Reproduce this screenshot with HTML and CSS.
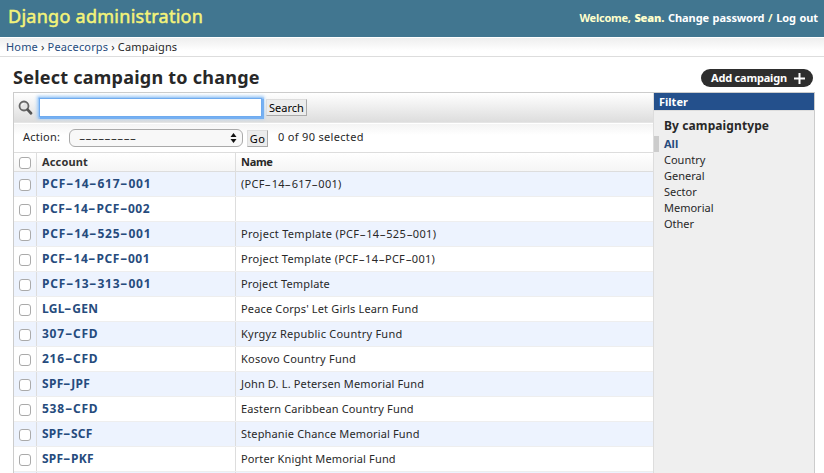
FILE: index.html
```html
<!DOCTYPE html>
<html lang="en">
<head>
<meta charset="utf-8">
<title>Select campaign to change</title>
<link rel="stylesheet" href="styles.css">
</head>
<body>
<header class="header">
  <div class="branding">Django administration</div>
  <div class="user-tools"><span class="welcome">Welcome,</span> <b class="user">Sean.</b> <a class="pw">Change password</a> / <a>Log out</a></div>
</header>
<nav class="breadcrumbs"><a>Home</a> › <a>Peacecorps</a> › Campaigns</nav>
<main class="content">
  <div class="title-row">
    <h1>Select campaign to change</h1>
    <a class="add"><span>Add campaign</span><svg width="11" height="11" viewBox="0 0 11 11"><path d="M5.5 0v11M0 5.5h11" stroke="#fff" stroke-width="2"/></svg></a>
  </div>
  <div class="changelist">
    <div class="results">
      <div class="toolbar">
        <svg class="glass" width="16" height="16" viewBox="0 0 16 16"><circle cx="6" cy="6" r="4.5" fill="#e4e4e4" stroke="#666" stroke-width="1.8"/><path d="M3.6 5.6a2.6 2.6 0 0 1 2.6-2.1" fill="none" stroke="#fff"/><path d="M9.6 9.6l3.4 3.6" stroke="#555" stroke-width="2.8" stroke-linecap="round"/></svg>
        <input class="query" type="text">
        <button class="btn search">Search</button>
      </div>
      <div class="actions">
        <span class="label">Action:</span>
        <div class="select"><span class="dashes">---------</span><svg width="7" height="10" viewBox="0 0 7 10"><path d="M3.5 0l3 4h-6zM3.5 10l3-4h-6z" fill="#111"/></svg></div>
        <button class="btn go">Go</button>
        <span class="count">0 of 90 selected</span>
      </div>
      <div class="row head"><div class="check"><i></i></div><div class="account">Account</div><div class="name">Name</div></div>
      <div class="row odd"><div class="check"><i></i></div><div class="account num">PCF<s>-</s>14<s>-</s>617<s>-</s>001</div><div class="name code">(PCF<s>-</s>14<s>-</s>617<s>-</s>001)</div></div>
      <div class="row"><div class="check"><i></i></div><div class="account mix">PCF<s>-</s>14<s>-</s>PCF<s>-</s>002</div><div class="name"></div></div>
      <div class="row odd"><div class="check"><i></i></div><div class="account num">PCF<s>-</s>14<s>-</s>525<s>-</s>001</div><div class="name code">Project Template (PCF<s>-</s>14<s>-</s>525<s>-</s>001)</div></div>
      <div class="row"><div class="check"><i></i></div><div class="account mix">PCF<s>-</s>14<s>-</s>PCF<s>-</s>001</div><div class="name code2">Project Template (PCF<s>-</s>14<s>-</s>PCF<s>-</s>001)</div></div>
      <div class="row odd"><div class="check"><i></i></div><div class="account num">PCF<s>-</s>13<s>-</s>313<s>-</s>001</div><div class="name">Project Template</div></div>
      <div class="row"><div class="check"><i></i></div><div class="account">LGL<s>-</s>GEN</div><div class="name">Peace Corps' Let Girls Learn Fund</div></div>
      <div class="row odd"><div class="check"><i></i></div><div class="account num">307<s>-</s>CFD</div><div class="name wide">Kyrgyz Republic Country Fund</div></div>
      <div class="row"><div class="check"><i></i></div><div class="account num">216<s>-</s>CFD</div><div class="name wide">Kosovo Country Fund</div></div>
      <div class="row odd"><div class="check"><i></i></div><div class="account tight">SPF<s>-</s>JPF</div><div class="name">John D. L. Petersen Memorial Fund</div></div>
      <div class="row"><div class="check"><i></i></div><div class="account num">538<s>-</s>CFD</div><div class="name">Eastern Caribbean Country Fund</div></div>
      <div class="row odd"><div class="check"><i></i></div><div class="account">SPF<s>-</s>SCF</div><div class="name">Stephanie Chance Memorial Fund</div></div>
      <div class="row"><div class="check"><i></i></div><div class="account">SPF<s>-</s>PKF</div><div class="name">Porter Knight Memorial Fund</div></div>
      <div class="row odd last"><div class="check"></div><div class="account"></div><div class="name"></div></div>
    </div>
    <aside class="filter">
      <h2>Filter</h2>
      <h3>By campaigntype</h3>
      <ul><li class="selected">All</li><li>Country</li><li>General</li><li>Sector</li><li>Memorial</li><li>Other</li></ul>
    </aside>
  </div>
</main>
</body>
</html>
```
FILE: styles.css
```css
* { box-sizing: border-box; }
body { margin: 0; background: #fff; color: #282828; font: 11px/16px "Noto Sans", "Lucida Grande", sans-serif; }
.header { height: 37px; padding: 0 6px 0 8px; display: flex; justify-content: space-between; background: #417690; color: #ffc; }
.branding { font-size: 18px; line-height: 33px; letter-spacing: .27px; color: #f4f379; -webkit-text-stroke: .5px #f4f379; }
.user-tools { font-weight: bold; line-height: 35px; letter-spacing: -.1px; word-spacing: .9px; white-space: pre; }
.welcome { letter-spacing: -.25px; }
.user-tools a { color: #fff; }
.breadcrumbs { height: 20px; padding: 0 6px; line-height: 18px; letter-spacing: .16px; border-top: 1px solid #fff; border-bottom: 1px solid #ddd; background: linear-gradient(#eee, #fff 70%); }
.breadcrumbs a { color: #264b7d; }
.content { padding: 0 9px 0 13px; }
.title-row { height: 35px; display: flex; justify-content: space-between; }
h1 { margin: 0; padding-top: 8px; font-size: 18px; line-height: 24px; letter-spacing: .24px; }
.add { width: 112px; height: 18px; margin: 12px 2px 0 0; padding: 0 8px 0 10px; display: flex; align-items: center; justify-content: space-between; border-radius: 9px; background: #2e2e2e; color: #fff; font-weight: bold; letter-spacing: -.2px; }
.changelist { height: 381px; display: flex; border: 1px solid #ccc; border-bottom: 0; }
.results { width: 639px; flex: none; }
.toolbar { height: 30px; padding-left: 4px; display: flex; align-items: center; background: linear-gradient(#fff, #ddd); border-bottom: 1px solid #e5e5e5; }
.glass { margin-right: 5px; }
.query { width: 223px; height: 19px; padding: 0; border: 1px solid #6fabef; outline: none; box-shadow: 0 0 1px 1.5px #76b0f2, 0 0 3px 2px #a3ccf8; }
.btn { padding: 0; border: 1px solid; border-color: #ddd #aaa #aaa #ddd; background: #ececec; color: #000; font: 11px/15px "Noto Sans", sans-serif; height: 17px; }
.search { width: 41px; margin-left: 4px; }
.go { width: 21px; margin-left: 4px; line-height: 13px; letter-spacing: .5px; }
.actions { height: 30px; padding-left: 9px; display: flex; align-items: center; background: linear-gradient(#f4f4f4, #fff 40%); border-bottom: 1px solid #ddd; border-top: 1px solid #fff; }
.label { width: 46px; padding-bottom: 2px; letter-spacing: .25px; }
.select { width: 174px; height: 18px; padding: 0 5px 0 9px; display: flex; align-items: center; justify-content: space-between; border: 1px solid #aaa; border-radius: 6px; background: #f8f8f8; }
.dashes { transform: scaleX(1.79); transform-origin: left; }
.count { margin-left: 10px; padding-bottom: 2px; letter-spacing: .32px; }
.row { height: 25px; display: flex; border-bottom: 1px solid #eee; background: #fff; }
.odd { background: #edf3fe; }
.check { width: 23px; padding: 7px 0 0 5px; border-right: 1px solid #ddd; }
.check i { display: block; width: 12px; height: 12px; border: 1px solid #aaa; border-radius: 3px; background: #fff; }
.account { width: 199px; padding-left: 5px; border-right: 1px solid #ddd; color: #264b7d; font-size: 12px; line-height: 24px; font-weight: bold; letter-spacing: .25px; }
.account.num { letter-spacing: .76px; }
.account.mix { letter-spacing: .6px; }
.account.tight { letter-spacing: .3px; }
.name { flex: 1; padding-left: 5px; line-height: 23px; letter-spacing: .15px; }
.name.wide { letter-spacing: .24px; }
.name.code { letter-spacing: .3px; }
.name.code2 { letter-spacing: .25px; }
s { display: inline-block; text-decoration: none; transform: scaleX(1.8); margin: 0 1.5px; }
.account s { margin: 0 1.75px; }
.head { height: 19px; border-color: #ddd; background: linear-gradient(#fff, #f5f5f5); font-weight: bold; }
.head .check { padding-top: 4px; }
.head .account { color: #333; font-size: 11px; line-height: 17px; letter-spacing: .15px; }
.head .name { line-height: 17px; letter-spacing: -.3px; }
.last { height: 2px; border-bottom: 0; }
.last .check { padding: 0; }
.filter { flex: 1; border-left: 1px solid #ddd; background: #efefef; }
h2 { margin: 0; height: 18px; padding-left: 5px; border-bottom: 1px solid #ddd; background: #24508c; color: #fff; font-size: 11px; line-height: 18px; }
h3 { margin: 7px 0 2px; padding-left: 10px; font-size: 12px; line-height: 16px; letter-spacing: .1px; }
ul { margin: 0; padding: 0; list-style: none; }
li { height: 16px; padding-left: 10px; }
.selected { padding-left: 5px; border-left: 5px solid #ccc; color: #264b7d; font-weight: bold; }
```
